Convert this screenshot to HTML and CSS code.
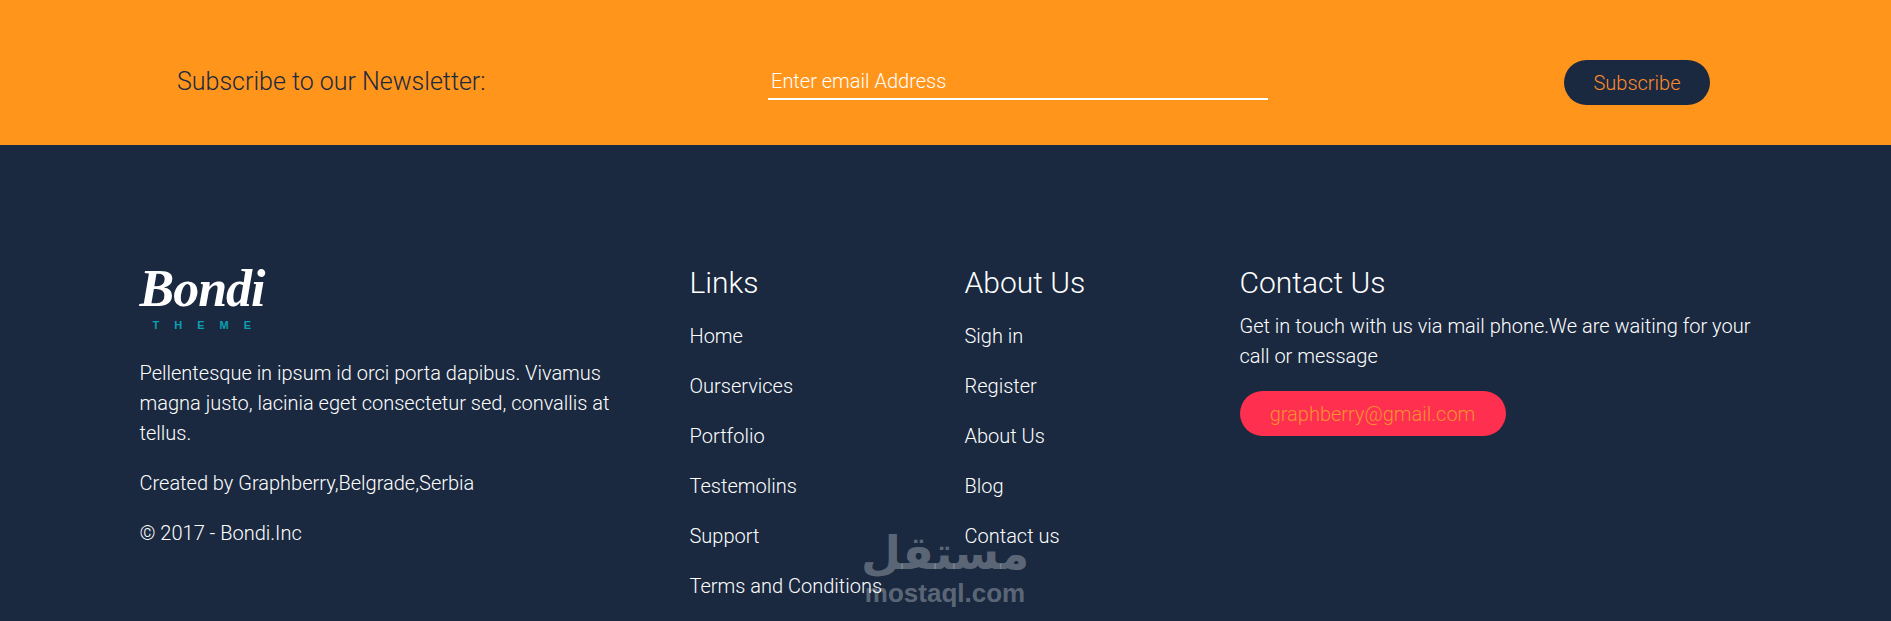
FILE: index.html
```html
<!DOCTYPE html>
<html lang="en">
<head>
  <meta charset="UTF-8">
  <meta name="viewport" content="width=device-width, initial-scale=1.0">
  <title>Bondi</title>
  <link rel="stylesheet" href="styles.css">
</head>
<body>
  <section class="newsletter">
    <p class="newsletter-title">Subscribe to our Newsletter:</p>
    <div class="newsletter-input">Enter email Address</div>
    <a class="subscribe-btn">Subscribe</a>
  </section>

  <footer class="footer">
    <div class="col-about">
      <div class="logo">
        <span class="logo-name">Bondi</span>
        <span class="logo-sub">THEME</span>
      </div>
      <p>Pellentesque in ipsum id orci porta dapibus. Vivamus magna justo, lacinia eget consectetur sed, convallis at tellus.</p>
      <p>Created by Graphberry,Belgrade,Serbia</p>
      <p>© 2017 - Bondi.Inc</p>
    </div>

    <div class="col-links">
      <h3>Links</h3>
      <ul>
        <li>Home</li>
        <li>Ourservices</li>
        <li>Portfolio</li>
        <li>Testemolins</li>
        <li>Support</li>
        <li>Terms and Conditions</li>
      </ul>
    </div>

    <div class="col-links">
      <h3>About Us</h3>
      <ul>
        <li>Sigh in</li>
        <li>Register</li>
        <li>About Us</li>
        <li>Blog</li>
        <li>Contact us</li>
      </ul>
    </div>

    <div class="col-contact">
      <h3>Contact Us</h3>
      <p>Get in touch with us via mail phone.We are waiting for your call or message</p>
      <a class="mail-btn">graphberry@gmail.com</a>
    </div>
  </footer>

  <div class="watermark">
    <span class="watermark-ar">مستقل</span>
    <span class="watermark-en">mostaql.com</span>
  </div>
</body>
</html>
```

FILE: styles.css
```css
html, body {
  height: 621px;
  overflow: hidden;
}

body {
  position: relative;
  margin: 0;
  font-family: Roboto, "Liberation Sans", sans-serif;
  font-weight: 300;
  font-size: 20px;
  line-height: 30px;
  color: #fff;
  background-color: #1a2940;
}

p {
  margin: 0;
}

.newsletter {
  display: flex;
  align-items: center;
  box-sizing: border-box;
  height: 145px;
  padding: 20px 0 0 177px;
  background-color: #ff951b;
}

.newsletter-title {
  width: 591px;
  font-size: 25px;
  color: #1a2940;
  padding-bottom: 2px;
}

.newsletter-input {
  width: 497px;
  height: 33px;
  padding-left: 3px;
  border-bottom: 2px solid #fff;
  font-size: 20px;
  line-height: 32px;
}

.subscribe-btn {
  margin-left: 296px;
  width: 146px;
  height: 45px;
  border-radius: 23px;
  background-color: #1a2940;
  color: #ff8c2a;
  font-size: 20px;
  line-height: 46px;
  text-align: center;
}

.footer {
  display: flex;
  padding: 120px 0 0 139.5px;
}

.col-about {
  width: 550px;
}

.col-about p {
  width: 490px;
  margin-bottom: 20px;
}

.logo {
  display: flex;
  flex-direction: column;
  width: 126px;
  height: 66px;
  margin-top: -5px;
  margin-bottom: 32px;
}

.logo-name {
  font-family: "Liberation Serif", serif;
  font-style: italic;
  font-weight: 700;
  font-size: 52px;
  line-height: 58px;
  letter-spacing: -1px;
  color: #fff;
}

.logo-sub {
  padding-left: 13px;
  font-family: "Liberation Sans", sans-serif;
  font-weight: 700;
  font-size: 11px;
  line-height: 14px;
  letter-spacing: 15px;
  color: #0b9fb3;
}

.col-links {
  width: 275px;
}

h3 {
  margin: 0 0 8px;
  font-size: 30px;
  font-weight: 300;
  line-height: 36px;
}

.col-links h3 {
  margin-bottom: 20px;
}

ul {
  margin: 0;
  padding: 0;
  list-style: none;
}

li {
  height: 30px;
  margin-bottom: 20px;
}

.col-contact {
  width: 515px;
}

.col-contact h3 {
  margin-bottom: 10px;
}

.mail-btn {
  display: block;
  width: 266px;
  height: 45px;
  margin-top: 20px;
  border-radius: 23px;
  background-color: #ff304f;
  color: #f7922e;
  font-size: 20px;
  line-height: 46px;
  text-align: center;
}

.watermark {
  position: absolute;
  left: 860px;
  top: 526px;
  width: 170px;
  text-align: center;
  color: rgba(255, 255, 255, 0.3);
  font-family: "DejaVu Sans", sans-serif;
  font-weight: 700;
}

.watermark-ar {
  display: block;
  font-size: 46px;
  line-height: 54px;
}

.watermark-en {
  display: block;
  font-family: "Liberation Sans", sans-serif;
  font-size: 26px;
  line-height: 26px;
}
```
